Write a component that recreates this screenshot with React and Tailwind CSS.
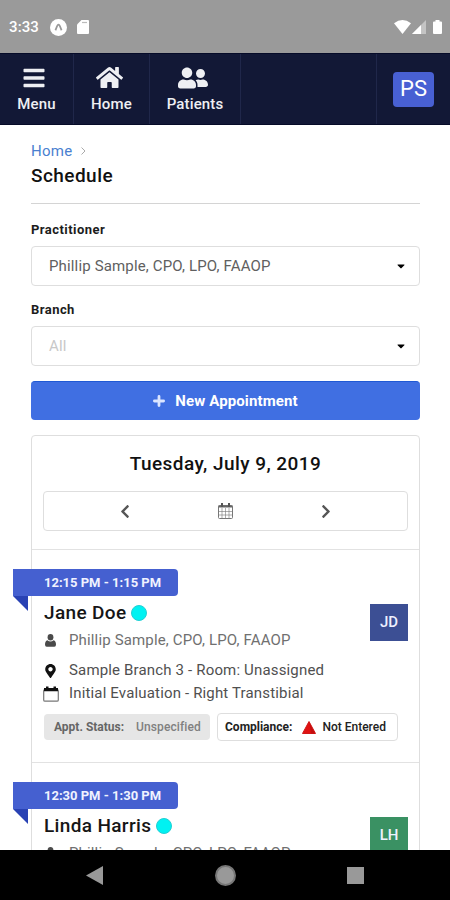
import React from 'react';
import { FaBars, FaHome, FaUserFriends, FaChevronLeft, FaChevronRight, FaMapMarkerAlt, FaCaretDown } from 'react-icons/fa';

const appointments = [
  { id: 1, time: '12:15 PM - 1:15 PM', name: 'Jane Doe', initials: 'JD', color: 'bg-[#3c4f94]' },
  { id: 2, time: '12:30 PM - 1:30 PM', name: 'Linda Harris', initials: 'LH', color: 'bg-[#3a9163]' },
];

const StatusBar = () => (
  <div className="h-[53px] shrink-0 bg-[#9a9a9a] flex items-center justify-between pl-[9px] pr-[8px] pt-px text-white">
    <div className="flex items-center">
      <span className="w-[41px] text-[15px] leading-5 font-medium tracking-[0.1px]">3:33</span>
      <svg className="w-[17px] h-[17px]" viewBox="0 0 17 17">
        <circle cx="8.5" cy="8.5" r="8.5" fill="#fff" />
        <path d="M5.4 11.2C6.400 9.500 7 5.600 8.500 5.600S10.600 9.500 11.600 11.200" fill="none" stroke="#999" strokeWidth="1.8" />
      </svg>
      <svg className="ml-[10px] w-[12px] h-[14px]" viewBox="0 0 12 14">
        <path d="M4.5 0H11a1 1 0 0 1 1 1v12a1 1 0 0 1-1 1H1a1 1 0 0 1-1-1V4.5Z" fill="#fff" />
        <path d="M5 2.5h5" stroke="#bbb" strokeWidth="1.2" />
      </svg>
    </div>
    <div className="flex items-center">
      <svg className="w-[17px] h-[14px]" viewBox="0 0 17 14">
        <path d="M0 3.200Q8.500-3 17 3.200L8.500 14Z" fill="#fff" />
      </svg>
      <svg className="ml-[1px] w-[14px] h-[14px]" viewBox="0 0 14 14">
        <path d="M14 0V14H0Z" fill="#c4c4c4" />
        <path d="M9 5V14H0Z" fill="#fff" />
      </svg>
      <svg className="ml-[7px] w-[9px] h-[14px]" viewBox="0 0 9 14">
        <path d="M2.500 0h4v1.500H8a1 1 0 0 1 1 1V13a1 1 0 0 1-1 1H1a1 1 0 0 1-1-1V2.500a1 1 0 0 1 1-1h1.500Z" fill="#fff" />
      </svg>
    </div>
  </div>
);

const NavItem = ({ icon, label, width }) => (
  <a className={`${width} flex flex-col items-center border-r border-[#20274a] pt-[11px]`}>
    <span className="h-[25px] flex items-center justify-center">{icon}</span>
    <span className="mt-[5px] text-[15px] leading-[18px] font-medium tracking-[0.15px]">{label}</span>
  </a>
);

const Navbar = () => (
  <nav className="h-[72px] shrink-0 bg-[#121836] border-t border-b border-[#060b28] flex text-[#eeeff3]">
    <NavItem width="w-[74px]" label="Menu" icon={<FaBars className="w-[24px] h-[24px] mr-[6px]" />} />
    <NavItem width="w-[76px]" label="Home" icon={<FaHome className="w-[27px] h-[27px] mr-[4px]" />} />
    <NavItem width="w-[91px]" label="Patients" icon={<FaUserFriends className="w-[30px] h-[30px] mr-[4px]" />} />
    <div className="w-[136px] border-r border-[#20274a]" />
    <div className="flex-1 flex items-center justify-center">
      <div className="w-[41px] h-[35px] rounded bg-[#4860d3] flex items-center justify-center text-[22px] leading-none text-white">PS</div>
    </div>
  </nav>
);

const SelectField = ({ label, value, muted }) => (
  <div>
    <label className="block text-[13px] leading-[18px] font-bold tracking-[0.45px] text-[#1c1c1c]">{label}</label>
    <div className="mt-[7px] h-[40px] border border-[#dedede] rounded flex items-center justify-between pl-[17px] pr-[12px]">
      <span className={`text-[15px] tracking-[0.15px] ${muted ? 'text-[#c8c8c8]' : 'text-[#606060]'}`}>{value}</span>
      <FaCaretDown className="w-3 h-[12px] text-black" />
    </div>
  </div>
);

const CalendarGrid = () => (
  <svg className="w-[15px] h-[16px]" viewBox="0 0 15 16" fill="none" stroke="#777">
    <rect x="0.500" y="2.500" width="14" height="13" rx="1" strokeWidth="1" />
    <path d="M0.500 3.500h14" stroke="#666" strokeWidth="2" />
    <path d="M4 0v4M11 0v4" stroke="#555" strokeWidth="2" />
    <path d="M4 5v10M7.500 5v10M11 5v10M1 8.500h13M1 12h13" strokeWidth="0.600" />
  </svg>
);

const CalendarOutline = () => (
  <svg className="w-4 h-4" viewBox="0 0 16 16" fill="none">
    <rect x="0.700" y="3.500" width="14.600" height="11.700" rx="1.300" stroke="#777" strokeWidth="1.200" />
    <path d="M1 2h14v3.200H1ZM3 0.500h2.500v2H3ZM10.500 0.500H13v2h-2.500Z" fill="#111" />
  </svg>
);

const Person = () => (
  <svg className="w-[11px] h-[13px]" viewBox="0 0 11 13" fill="#4a4a4a">
    <ellipse cx="5.500" cy="3.200" rx="2.900" ry="3.200" />
    <path d="M2.400 6.200Q5.500 8.600 8.600 6.200Q11 7 11 10.500Q11 12.800 9.300 12.800H1.700Q0 12.800 0 10.500Q0 7 2.400 6.200Z" />
  </svg>
);

const Plus = () => (
  <svg className="w-3 h-3" viewBox="0 0 12 12">
    <path d="M6 1.400v9.200M1.400 6h9.200" stroke="#dbe5ff" strokeWidth="2.800" strokeLinecap="round" />
  </svg>
);

const Warning = () => (
  <svg className="w-[14px] h-[13px]" viewBox="0 0 14 13">
    <path d="M7 0.500L13.500 12.500H0.500Z" fill="#e01212" stroke="#d01818" strokeLinejoin="round" />
    <path d="M7.500 2L13 12.500H9Z" fill="#c40e0e" />
  </svg>
);

const Appointment = ({ item }) => (
  <div className="relative h-[213px] shrink-0 border-t border-[#e2e2e2] pl-3 pr-[11px] pt-[19px]">
    {/* ribbon hangs over the left edge of the card */}
    <div className="relative -ml-[31px] w-[165px] h-[27px] rounded-r bg-[#4560d0] pl-[31px] flex items-center text-[13px] font-bold text-[#f0f2ff]">
      <span className="whitespace-nowrap">{item.time}</span>
      <svg className="absolute left-0 top-[27px] w-[15px] h-[15px]" viewBox="0 0 15 15">
        <path d="M0 0H15V15Z" fill="#2942b4" />
      </svg>
    </div>
    <div className="flex justify-between">
      <div>
        <div className="mt-[5px] h-6 flex items-center">
          <span className="text-[19px] leading-6 font-medium tracking-[0.35px] text-[#161616]">{item.name}</span>
          <span className="ml-[5px] w-4 h-4 rounded-full bg-[#00f2f2] border border-[#22cfd4]" />
        </div>
        <div className="mt-[4px] h-[23px] flex items-center text-[15px] tracking-[0.15px] text-[#707070]">
          <span className="ml-px mr-[13px]"><Person /></span>Phillip Sample, CPO, LPO, FAAOP
        </div>
        <div className="mt-[7px] h-[23px] flex items-center text-[15px] tracking-[0.16px] text-[#505050]">
          <FaMapMarkerAlt className="w-[13px] h-[14px] mr-[12px] text-[#111]" />Sample Branch 3 - Room: Unassigned
        </div>
        <div className="h-[23px] flex items-center text-[15px] tracking-[0.16px] text-[#505050]">
          <span className="-ml-px mr-[10px]"><CalendarOutline /></span>Initial Evaluation - Right Transtibial
        </div>
      </div>
      <div className={`mt-[8px] w-[38px] h-[37px] flex items-center justify-center text-[15px] font-medium text-[#eef1ff] ${item.color}`}>{item.initials}</div>
    </div>
    <div className="mt-2 flex items-center gap-[7px] text-[12px]">
      <div className="w-[166px] h-[26px] rounded bg-[#e6e6e6] flex items-center pl-[10px] whitespace-nowrap">
        <span className="font-bold text-[#666]">Appt. Status:</span>
        <span className="ml-3 font-medium tracking-[0.1px] text-[#808080]">Unspecified</span>
      </div>
      <div className="w-[181px] h-[28px] rounded border border-[#dedede] flex items-center pl-[7px] whitespace-nowrap text-[#222]">
        <span className="font-bold">Compliance:</span>
        <span className="ml-[10px] mr-[6px]"><Warning /></span>
        <span className="font-medium">Not Entered</span>
      </div>
    </div>
  </div>
);

const SystemNav = () => (
  <div className="h-[50px] shrink-0 bg-black flex items-center justify-between pl-[86px] pr-[86px]">
    <svg className="w-[17px] h-[19px]" viewBox="0 0 17 19"><path d="M17 0V19L0 9.500Z" fill="#999" /></svg>
    <div className="w-[21px] h-[21px] rounded-full bg-[#999] border-2 border-[#777]" />
    <div className="w-[17px] h-[17px] bg-[#999]" />
  </div>
);

export default function App() {
  return (
    <div className="w-[450px] h-[900px] flex flex-col overflow-hidden bg-white font-[Roboto,sans-serif]">
      <StatusBar />
      <Navbar />
      <main className="flex-1 min-h-0 overflow-hidden flex flex-col pl-[31px] pr-[30px] pt-4">
        <div className="h-5 flex items-center">
          <span className="text-[15px] leading-5 tracking-[0.3px] text-[#4a7fd0]">Home</span>
          <svg className="ml-2 w-[5px] h-[8px]" viewBox="0 0 5 8"><path d="M0.500 0.500L4 4L0.500 7.500" fill="none" stroke="#aaa" /></svg>
        </div>
        <h1 className="mt-[3px] text-[19px] leading-6 font-medium tracking-[0.45px] text-[#111]">Schedule</h1>
        <hr className="mt-[15px] mb-[17px] border-0 h-px shrink-0 bg-[#d4d4d4]" />

        <SelectField label="Practitioner" value="Phillip Sample, CPO, LPO, FAAOP" />
        <div className="mt-[15px]">
          <SelectField label="Branch" value="All" muted />
        </div>

        <button className="mt-[15px] h-[39px] shrink-0 rounded bg-[#406fe2] border-t border-[#2059d4] flex items-center justify-center text-[15px] font-bold tracking-[0.12px] text-white">
          <span className="mr-[10px]"><Plus /></span>
          New Appointment
        </button>

        <section className="mt-[15px] border border-[#dedede] rounded shrink-0">
          <h2 className="mt-[16px] text-center text-[19px] leading-6 font-medium tracking-[0.45px] text-[#111]">Tuesday, July 9, 2019</h2>
          <div className="mx-[11px] mt-[15px] mb-[18px] h-[40px] border border-[#dedede] rounded flex items-center justify-center text-[#555]">
            <FaChevronLeft className="w-[14px] h-[15px]" />
            <span className="mx-[86px]"><CalendarGrid /></span>
            <FaChevronRight className="w-[14px] h-[15px]" />
          </div>
          {appointments.map(item => (
            <Appointment key={item.id} item={item} />
          ))}
        </section>
      </main>
      <SystemNav />
    </div>
  );
}
